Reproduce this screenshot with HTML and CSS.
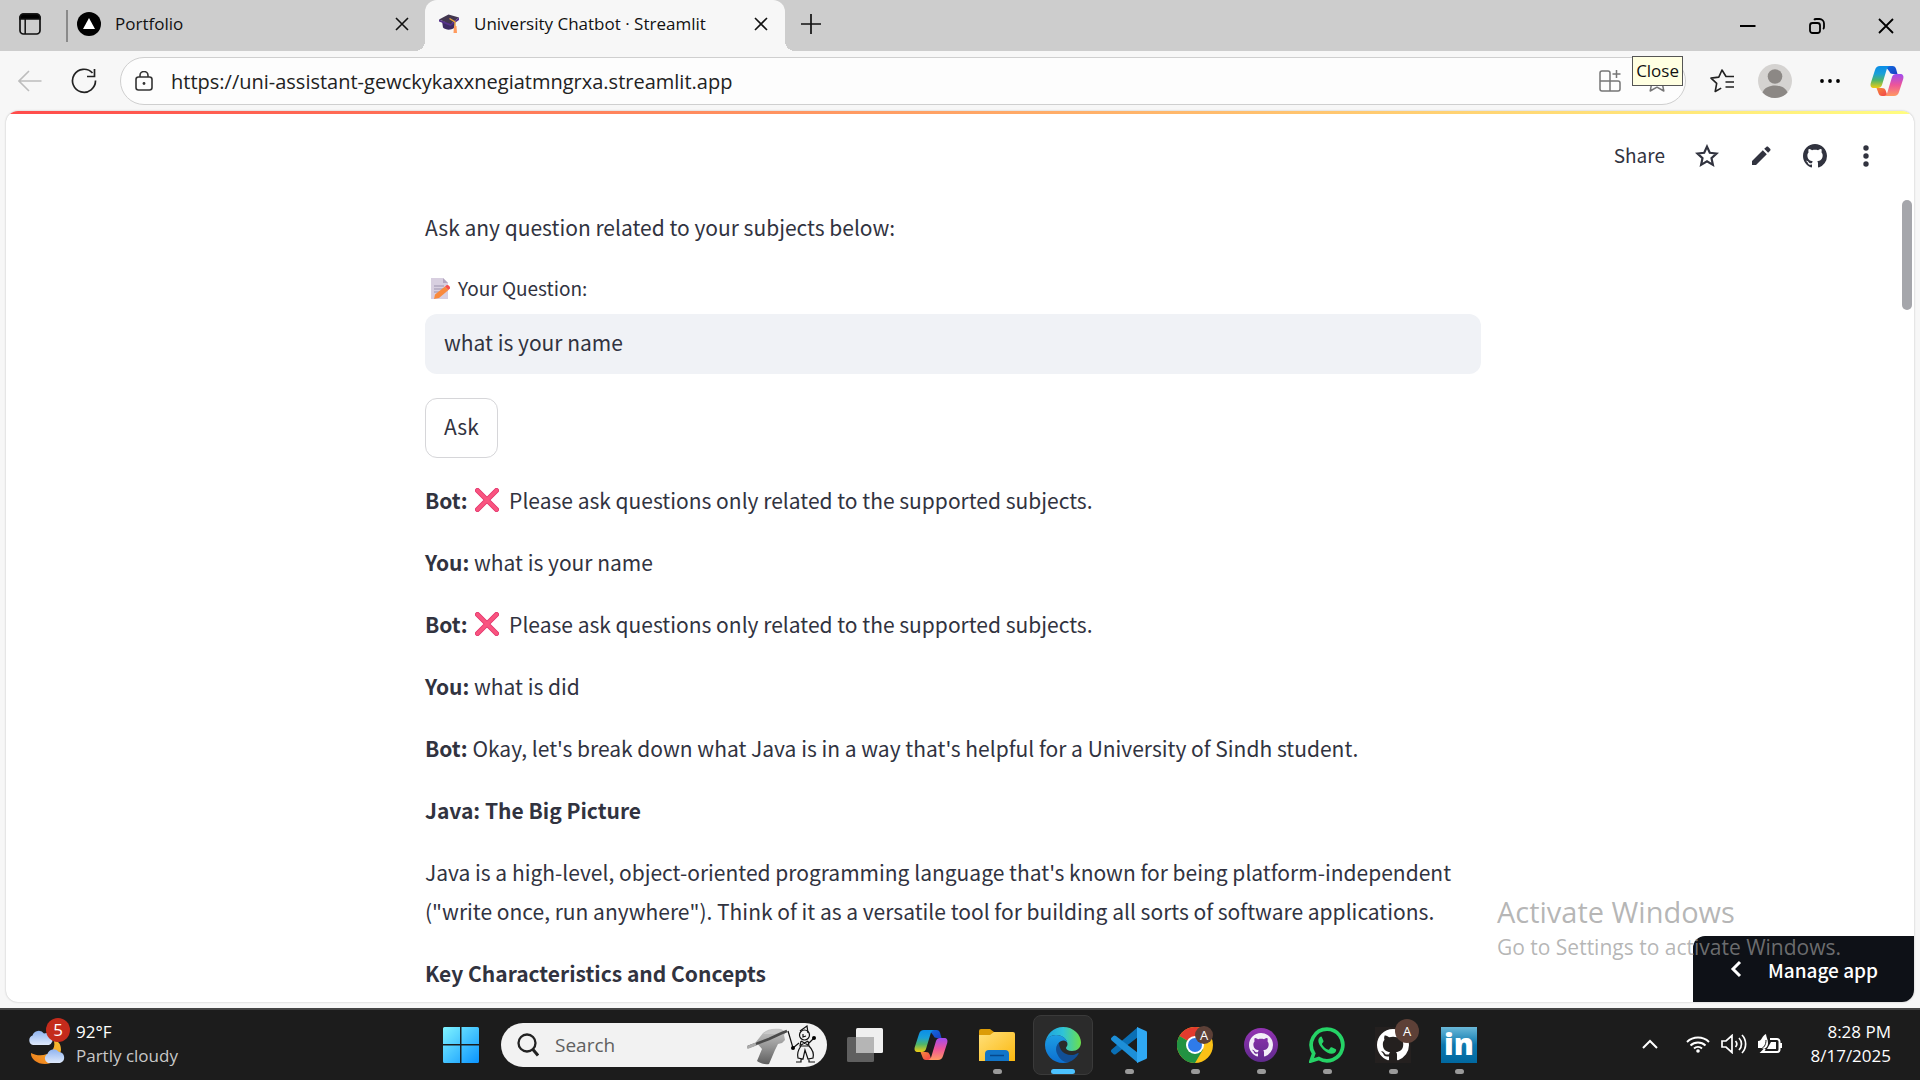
FILE: index.html
```html
<!DOCTYPE html>
<html lang="en">
<head>
<meta charset="utf-8">
<title>University Chatbot · Streamlit</title>
<meta name="viewport" content="width=device-width, initial-scale=1">
<link rel="stylesheet" href="styles.css">
</head>
<body>
<svg class="defs" aria-hidden="true">
  <defs>
    <linearGradient id="cpA" x1="0" y1="0" x2="0" y2="1"><stop offset="0" stop-color="#0a8de8"/><stop offset=".35" stop-color="#1aa0d8"/><stop offset=".65" stop-color="#4fb56a"/><stop offset="1" stop-color="#f0cc12"/></linearGradient>
    <linearGradient id="cpB" x1="0" y1="0" x2="0" y2="1"><stop offset="0" stop-color="#a04bf0"/><stop offset=".5" stop-color="#ee5599"/><stop offset="1" stop-color="#ff9a62"/></linearGradient>
    <linearGradient id="cpC" x1="0" y1="0" x2="1" y2="1"><stop offset="0" stop-color="#0f6fe0"/><stop offset="1" stop-color="#1a3fc4"/></linearGradient>
    <linearGradient id="cpD" x1="0" y1="0" x2="1" y2="1"><stop offset="0" stop-color="#f58a3c"/><stop offset="1" stop-color="#f2404a"/></linearGradient>
    <linearGradient id="win" x1="0" y1="0" x2="1" y2="1"><stop offset="0" stop-color="#80f4ff"/><stop offset="1" stop-color="#0a94ff"/></linearGradient>
    <linearGradient id="cloud" x1="0" y1="0" x2="0" y2="1"><stop offset="0" stop-color="#8fb4f0"/><stop offset="1" stop-color="#dfe9fb"/></linearGradient>
    <linearGradient id="moon" x1="1" y1="0" x2="0" y2="1"><stop offset="0" stop-color="#f8c030"/><stop offset="1" stop-color="#ee7a1c"/></linearGradient>
    <linearGradient id="fold" x1="0" y1="0" x2="1" y2="1"><stop offset="0" stop-color="#ffe07a"/><stop offset="1" stop-color="#fbb80f"/></linearGradient>
    <linearGradient id="edgeTop" x1="0" y1="0" x2="1" y2="0"><stop offset="0" stop-color="#1a9fe0"/><stop offset=".5" stop-color="#2fc3d8"/><stop offset="1" stop-color="#6be04b"/></linearGradient>
    <linearGradient id="edgeL" x1="0" y1="0" x2="0" y2="1"><stop offset="0" stop-color="#1d9ee4"/><stop offset="1" stop-color="#0c6fd0"/></linearGradient>
    <linearGradient id="linked" x1="0" y1="0" x2="0" y2="1"><stop offset="0" stop-color="#6ab8d8"/><stop offset=".5" stop-color="#0d78ae"/><stop offset="1" stop-color="#0168a0"/></linearGradient>
    <linearGradient id="ghp" x1="0" y1="0" x2="0" y2="1"><stop offset="0" stop-color="#9333b3"/><stop offset="1" stop-color="#5f2a8c"/></linearGradient>
    <linearGradient id="hand" x1="0" y1="0" x2="0" y2="1"><stop offset="0" stop-color="#c8c8c8"/><stop offset=".5" stop-color="#969696"/><stop offset="1" stop-color="#5e5e5e"/></linearGradient>
    <symbol id="copilot" viewBox="0 0 34 32">
      <path d="M15 1h7.500c2 0 3 1 3.600 3l1.400 5h-4.500c-2 0-3-.8-3.600-2.500z" fill="url(#cpC)"/>
      <path d="M10 1h10c-2 .5-3 2-3.500 4l-4.500 15c-.7 2-2 3-4 3H4c-3 0-4-2-3.200-5L5 5c.8-2.600 2.400-4 5-4z" fill="url(#cpA)"/>
      <path d="M6.500 23h5c2.500 0 3.600.8 4.200 2.600L17.500 31H12c-2 0-3-1-3.600-3z" fill="url(#cpD)"/>
      <path d="M24 31H14c2-.5 3-2 3.500-4L22 12c.7-2 2-3 4-3h4c3 0 4 2 3.200 5L29 27c-.8 2.600-2.400 4-5 4z" fill="url(#cpB)"/>
    </symbol>
    <symbol id="octocat" viewBox="0 0 16 16">
      <path d="M8 0C3.580 0 0 3.580 0 8c0 3.540 2.290 6.530 5.470 7.590.4.070.550-.170.550-.380 0-.190-.010-.820-.010-1.490-2.010.370-2.530-.490-2.690-.940-.090-.230-.480-.940-.820-1.130-.280-.150-.680-.520-.010-.530.630-.010 1.080.580 1.230.820.720 1.210 1.870.870 2.330.660.070-.520.280-.870.510-1.070-1.780-.2-3.640-.890-3.640-3.950 0-.870.310-1.590.820-2.150-.080-.2-.360-1.020.080-2.120 0 0 .670-.210 2.200.820.640-.180 1.320-.270 2-.270s1.360.090 2 .270c1.530-1.040 2.200-.820 2.200-.820.440 1.100.160 1.920.080 2.120.510.560.820 1.270.820 2.150 0 3.070-1.870 3.750-3.650 3.950.290.250.540.730.540 1.480 0 1.070-.010 1.930-.010 2.200 0 .210.150.460.550.380A8.010 8.010 0 0 0 16 8c0-4.420-3.580-8-8-8z"/>
    </symbol>
    <symbol id="close" viewBox="0 0 14 14"><path d="M1 1l12 12M13 1L1 13" fill="none" stroke="#111" stroke-width="1.600"/></symbol>
    <symbol id="cross" viewBox="0 0 24 24"><path d="M2.500 2.500l19 19M21.500 2.500l-19 19" stroke="#e0306a" stroke-width="5" stroke-linecap="round"/><path d="M2.500 2.500l19 19M21.500 2.500l-19 19" stroke="#f9547f" stroke-width="3.600" stroke-linecap="round"/></symbol>
  </defs>
</svg>

<div class="desktop">
  <header class="tabstrip">
    <button class="tab-menu" aria-label="Tab actions">
      <svg width="22" height="22" viewBox="0 0 22 22"><rect x="1" y="1" width="20" height="20" rx="3.500" fill="none" stroke="#111" stroke-width="1.700"/><path d="M1 6V4.500A3.500 3.500 0 0 1 4.500 1h13A3.500 3.500 0 0 1 21 4.500V6zM6.200 6v15" stroke="#111" stroke-width="1.500"/></svg>
    </button>
    <div class="tab">
      <svg width="24" height="24" viewBox="0 0 24 24"><circle cx="12" cy="12" r="12"/><path d="M12 6l6 11H6z" fill="#fff"/></svg>
      <span class="tab-title">Portfolio</span>
      <button aria-label="Close tab"><svg width="14" height="14"><use href="#close"/></svg></button>
    </div>
    <div class="tab tab-active">
      <svg width="20" height="20" viewBox="0 0 20 20"><path d="M3 7l1 6.500c2.500 2.500 7.500 3 11 .5l1-5z" fill="#3d2a63"/><path d="M0 5.500L9.500.5 20 3.500 11.500 10z" fill="#42364f"/><path d="M11.500 10L20 3.500V6l-8.500 6L0 7.500v-2z" fill="#55318a"/><path d="M10.500 4.500L16 8v5" fill="none" stroke="#e9a23b" stroke-width="1.400"/><path d="M15 12h2.500l.5 7h-3.500z" fill="#ff9b5e"/></svg>
      <span class="tab-title">University Chatbot · Streamlit</span>
      <button aria-label="Close tab"><svg width="14" height="14"><use href="#close"/></svg></button>
    </div>
    <button class="new-tab" aria-label="New tab"><svg width="22" height="22" viewBox="0 0 22 22"><path d="M11 1v20M1 11h20" stroke="#111" stroke-width="1.700"/></svg></button>
    <div class="window-controls">
      <button aria-label="Minimize"><svg width="16" height="16" viewBox="0 0 16 16"><path d="M0 8h15.500" stroke="#000" stroke-width="2"/></svg></button>
      <button aria-label="Restore"><svg width="16" height="16" viewBox="0 0 16 16" fill="none" stroke="#000" stroke-width="1.800"><rect x="1" y="5" width="10" height="10" rx="2.500"/><path d="M5 1.800C5.500 1.200 6 1 7 1h3.500A4.500 4.500 0 0 1 15 5.500V9c0 1-.3 1.600-1 2"/></svg></button>
      <button aria-label="Close window"><svg width="16" height="16" viewBox="0 0 16 16"><path d="M1 1l14 14M15 1L1 15" stroke="#000" stroke-width="1.800"/></svg></button>
    </div>
  </header>

  <nav class="toolbar">
    <button class="back" aria-label="Back"><svg width="24" height="22" viewBox="0 0 24 22"><path d="M23.500 11H1M11 1L1 11l10 10" fill="none" stroke="#bdbdbd" stroke-width="1.600"/></svg></button>
    <button class="reload" aria-label="Refresh"><svg width="26" height="26" viewBox="0 0 26 26"><path d="M24.500 12.500A11.500 11.500 0 1 1 21.500 5M23.500 1v7.500H16" fill="none" stroke="#222" stroke-width="1.700"/></svg></button>
    <div class="address">
      <svg width="18" height="20" viewBox="0 0 18 20" fill="none" stroke="#333" stroke-width="1.600"><rect x="1" y="6" width="16" height="13" rx="2.500"/><path d="M5 6V4.500a4 4 0 0 1 8 0V6"/><circle cx="9" cy="12.500" r="1.400" fill="#333" stroke="none"/></svg>
      <input type="text" aria-label="Address" value="https://uni-assistant-gewckykaxxnegiatmngrxa.streamlit.app">
      <button aria-label="App available"><svg width="22" height="22" viewBox="0 0 22 22" fill="none" stroke="#767676" stroke-width="1.500"><path d="M1 11V3a2 2 0 0 1 2-2h6a2 2 0 0 1 2 2v18H3a2 2 0 0 1-2-2v-8h18a2 2 0 0 1 2 2v6a2 2 0 0 1-2 2h-8M17.500 0v8M13.500 4h8"/></svg></button>
      <button class="favorite" aria-label="Add to favorites"><svg width="24" height="24" viewBox="0 0 24 24" fill="none" stroke="#767676" stroke-width="1.500" stroke-linejoin="round"><path d="M12 1l3.300 7.100 7.700 1-5.700 5.300L18.800 22 12 18.200 5.200 22l1.500-7.600L1 9.100l7.700-1z"/></svg></button>
      <span class="tooltip" role="tooltip">Close</span>
    </div>
    <button class="collections" aria-label="Favorites"><svg width="24" height="24" viewBox="0 0 24 24" fill="none" stroke="#222" stroke-width="1.600" stroke-linejoin="round"><path d="M16 7.500L12 1 8.800 8.100 1 9.100l5.700 5.300L5.200 22.500l6-3.400M15.500 7.500H24M15.500 13H24M15.500 18H24"/></svg></button>
    <button class="profile" aria-label="Profile"><svg width="34" height="34" viewBox="0 0 34 34"><circle cx="17" cy="17" r="17" fill="#d5d3d1"/><circle cx="17" cy="12.500" r="7.300" fill="#8c8885"/><path d="M4.500 28.500c2-5 7-7 12.500-7s10.500 2 12.500 7A17 17 0 0 1 17 34a17 17 0 0 1-12.500-5.500z" fill="#8c8885"/></svg></button>
    <button class="more" aria-label="Settings and more"><svg width="20" height="4" viewBox="0 0 20 4"><circle cx="2" cy="2" r="1.900"/><circle cx="10" cy="2" r="1.900"/><circle cx="18" cy="2" r="1.900"/></svg></button>
    <button aria-label="Copilot"><svg width="34" height="32"><use href="#copilot"/></svg></button>
  </nav>

  <div class="viewport">
    <div class="page">
      <div class="app-header">
        <button class="share">Share</button>
        <button aria-label="Star"><svg width="24" height="24" viewBox="0 0 24 24" fill="none" stroke="#31333f" stroke-width="2.200"><path d="M12 2.600l2.800 6.200 6.700.7-5 4.600 1.400 6.800-5.900-3.500-5.900 3.500 1.400-6.800-5-4.600 6.700-.7z"/></svg></button>
        <button aria-label="Edit"><svg width="20" height="20" viewBox="0 0 20 20" fill="#31333f"><path d="M1 15L11.800 4.200l4 4L5 19H1zM13.200 2.800L15.300.9c.6-.6 1.400-.6 2 0l1.800 1.800c.6.600.6 1.400 0 2l-2 2.100z"/></svg></button>
        <button aria-label="View source"><svg width="24" height="24" fill="#31333f"><use href="#octocat"/></svg></button>
        <button class="menu-dots" aria-label="Main menu"><svg width="6" height="22" viewBox="0 0 6 22" fill="#31333f"><circle cx="3" cy="3" r="2.700"/><circle cx="3" cy="11" r="2.700"/><circle cx="3" cy="19" r="2.700"/></svg></button>
      </div>
      <div class="scroll-area">
        <main class="content">
          <p>Ask any question related to your subjects below:</p>
          <form class="ask-form">
            <div class="field">
              <label for="question"><svg width="20" height="22" viewBox="0 0 20 22"><path d="M0 1h12l5 5v16H0z" fill="#d8cfe0"/><path d="M12 1l5 5h-5z" fill="#b3a6c0"/><path d="M3 9h10M3 12h9M3 15h7" stroke="#9b93ad" stroke-width="1.200"/><path d="M3 22l1-4.500L14 9.500l3.500 3.500-9.500 8z" fill="#f98a3d"/><path d="M14 9.500l1.500-1.300c1.500-.5 4 1.500 3.400 3L17.500 13z" fill="#f4504e"/></svg> Your Question:</label>
              <input id="question" type="text" value="what is your name">
            </div>
            <button class="ask" type="button">Ask</button>
          </form>
          <p><b>Bot:</b> <svg class="cross" width="24" height="24"><use href="#cross"/></svg> Please ask questions only related to the supported subjects.</p>
          <p><b>You:</b> what is your name</p>
          <p><b>Bot:</b> <svg class="cross" width="24" height="24"><use href="#cross"/></svg> Please ask questions only related to the supported subjects.</p>
          <p><b>You:</b> what is did</p>
          <p><b>Bot:</b> Okay, let's break down what Java is in a way that's helpful for a University of Sindh student.</p>
          <p><b>Java: The Big Picture</b></p>
          <p>Java is a high-level, object-oriented programming language that's known for being platform-independent ("write once, run anywhere"). Think of it as a versatile tool for building all sorts of software applications.</p>
          <p><b>Key Characteristics and Concepts</b></p>
        </main>
      </div>
      <div class="scroll-thumb"></div>
      <button class="manage"><svg width="12" height="18" viewBox="0 0 12 18"><path d="M10 2L3 9l7 7" fill="none" stroke="#fff" stroke-width="3"/></svg>Manage app</button>
    </div>
    <div class="watermark"><div class="watermark-title">Activate Windows</div><div>Go to Settings to activate Windows.</div></div>
  </div>

  <footer class="taskbar">
    <button class="weather">
      <span class="weather-icon"><svg width="38" height="42" viewBox="0 0 38 42"><path d="M26 18c3 12-12 18-23 12-.5 6 6 11 14 11s15-6 16-14c0-4-1-9-7-9z" fill="url(#moon)"/><path d="M5 22a5 5 0 0 1-.5-9.500A6.500 6.500 0 0 1 16 10.500 6 6 0 0 1 21 22z" fill="url(#cloud)"/><path d="M20 40a5 5 0 0 1-.5-9A6.500 6.500 0 0 1 31 29a5.600 5.600 0 0 1 1 11z" fill="url(#cloud)"/></svg><span class="badge">5</span></span>
      <span class="weather-text"><span>92°F</span><span class="muted">Partly cloudy</span></span>
    </button>
    <div class="apps">
      <button class="app" aria-label="Start"><svg width="36" height="36" viewBox="0 0 36 36"><path d="M1.500 0H17v17H0V1.500A1.500 1.500 0 0 1 1.500 0zM18.500 0h16A1.500 1.500 0 0 1 36 1.500V17H18.500zM0 18.500h17V36H1.500A1.500 1.500 0 0 1 0 34.500zM18.500 18.500H36v16a1.500 1.500 0 0 1-1.500 1.500h-16z" fill="url(#win)"/></svg></button>
      <div class="search">
        <svg width="22" height="24" viewBox="0 0 22 24" fill="none" stroke="#222" stroke-width="2.300"><circle cx="10" cy="10" r="8.500"/><path d="M15.500 16l5.500 6.500" stroke-width="3"/></svg>
        <input type="text" aria-label="Search" placeholder="Search">
        <svg width="70" height="40" viewBox="0 0 70 40"><path d="M9 17l7-9c4-4 10-5 18-4l5 3-2 3 1 5-3 3-4 1-3 6-6 14c-4 1-9-1-12-3l5-12z" fill="url(#hand)"/><path d="M16 9c6-5 14-5 20-3l-8 3z" fill="#c9c9c9"/><path d="M1 22L22 14 35 8l5-2" fill="none" stroke="#4a4a4a" stroke-width="2.500"/><path d="M0 22.500l9-3.500" stroke="#aaa" stroke-width="3"/><g fill="none" stroke="#111" stroke-width="1.200"><path d="M41 6l5 17 6-5M53 6l7-5 1 7"/><circle cx="57.500" cy="10" r="5"/><path d="M56 9v3l3-1M54 16l-1 5h9l-1-5M54 16l7 4M61 16l-7 4M62 18l5-5M54 21c-3 4-4 8-3 12l5 1 2-9 3 9 5-1c1-4-1-9-4-12M54 34v3h-5M62 34v3h6"/></g><circle cx="46" cy="23" r="2"/><circle cx="67" cy="13" r="2"/></svg>
      </div>
      <button class="app" aria-label="Task view"><svg width="36" height="34" viewBox="0 0 36 34"><rect x="9" width="27" height="25" rx="1.500" fill="#efefef"/><rect y="9" width="27" height="25" rx="1.500" fill="#5f5f5f"/><path d="M9 9h18v16H9z" fill="#b5b5b5"/></svg></button>
      <button class="app" aria-label="Copilot"><svg width="34" height="32"><use href="#copilot"/></svg></button>
      <button class="app running" aria-label="File Explorer"><svg width="36" height="34" viewBox="0 0 36 34"><path d="M0 3a2 2 0 0 1 2-2h9l4 3v6H0z" fill="#dc9c07"/><path d="M0 7h11l4-3h19a2 2 0 0 1 2 2v27H0z" fill="url(#fold)"/><path d="M6 33V26a4 4 0 0 1 4-4h16a4 4 0 0 1 4 4v7z" fill="#1275c8"/><path d="M11 27.500h14" stroke="#07488c" stroke-width="1.500"/></svg></button>
      <button class="app running active" aria-label="Microsoft Edge"><svg width="36" height="36" viewBox="0 0 36 36"><path d="M0 17C1 7 9 0 18 0c11 0 18 8 18 15.500 0 5-4 8.500-9 8.500-4 0-6-1.500-6-3 0-1 1.500-1.500 1.500-4C22 11 16 8 11 8 5 8 1 12 0 17z" fill="url(#edgeTop)"/><path d="M0 18C0 12 5 8 11 8c7 0 11.500 4.500 11.500 9 0-2-2-3.500-4-3.500-4 0-7 4-6 9C14 31 20 35 24 35c-2 .7-4 1-6 1C8 36 0 28 0 18z" fill="url(#edgeL)"/><path d="M14 15.500c-3 3-4 7-1.500 12C15 33 20 36 24 35c4-1.300 7.500-4.500 9.500-8 .5-1-.3-1.300-1-.8-2 1.300-4.500 1.800-6.500 1.800-7 0-12-5-12-12.500z" fill="#114f96"/></svg></button>
      <button class="app running" aria-label="Visual Studio Code"><svg width="36" height="36" viewBox="0 0 36 36"><path d="M27 0v10L5 27c-1 .8-2 .7-2.700 0L.7 25.500c-1-.9-1-2 0-2.900z" fill="#0a6fb5"/><path d="M27 36V26L5 9c-1-.8-2-.7-2.700 0L.7 10.500c-1 .9-1 2 0 2.900z" fill="#1d8fd8"/><path d="M26 0l9 4c.6.300 1 .8 1 1.500v25c0 .7-.4 1.200-1 1.500l-9 4z" fill="#2fa8f3"/></svg></button>
      <button class="app running" aria-label="Google Chrome"><svg width="36" height="36" viewBox="0 0 36 36"><circle cx="18" cy="18" r="18" fill="#fbc116"/><path d="M18 18L2.400 9A18 18 0 0 1 33.600 9z" fill="#e33b2e"/><path d="M18 18L2.400 9A18 18 0 0 0 18 36l8-13.500z" fill="#229342"/><circle cx="18" cy="18" r="9" fill="#fff"/><circle cx="18" cy="18" r="7" fill="#2f7bea"/></svg><span class="account account-small">A</span></button>
      <button class="app running" aria-label="GitHub Desktop"><svg width="34" height="34" viewBox="0 0 34 34"><circle cx="17" cy="17" r="17" fill="url(#ghp)"/><svg x="5" y="5" width="24" height="24" fill="#f2eef8"><use href="#octocat"/></svg></svg></button>
      <button class="app running" aria-label="WhatsApp"><svg width="36" height="36" viewBox="0 0 36 36"><path d="M18 2.200A15.800 15.800 0 0 0 4.700 26.500L2.100 33.900l7.700-2.400A15.800 15.800 0 1 0 18 2.200z" fill="none" stroke="#25d366" stroke-width="3.700"/><path d="M12.500 9.500c-1.500 0-3.200 1.700-3.200 4.200 0 5 8 13 13.200 13 2.600 0 4.700-1.700 4.700-3.500 0-.7-.2-.9-.8-1.200l-3.600-1.700c-.6-.2-1-.1-1.400.4l-1.300 1.700c-.4.400-.8.400-1.300.2-2.400-1-4.500-3-5.700-5.200-.2-.4-.1-.8.2-1.100l1-1.300c.3-.4.300-.8.100-1.200l-1.500-3.500c-.2-.5-.3-.8-.4-.8z" fill="#25d366"/></svg></button>
      <button class="app running" aria-label="GitHub"><svg width="36" height="36" viewBox="0 0 36 36"><path d="M0 0h36v36H0z" fill="#24201f"/><svg x="2" y="2" width="32" height="32" fill="#fff"><use href="#octocat"/></svg></svg><span class="account">A</span></button>
      <button class="app running" aria-label="LinkedIn"><svg width="36" height="36" viewBox="0 0 36 36"><path d="M0 0h36v36H0z" fill="url(#linked)"/><text class="linkedin-mark" x="18" y="28" text-anchor="middle">in</text></svg></button>
    </div>
    <div class="tray">
      <button aria-label="Show hidden icons"><svg width="16" height="10" viewBox="0 0 16 10"><path d="M1 9l7-7 7 7" fill="none" stroke="#fff" stroke-width="2"/></svg></button>
      <button class="quick" aria-label="Network, volume and battery">
        <svg width="24" height="18" viewBox="0 0 24 18" fill="none" stroke="#fff" stroke-width="2"><path d="M1 7a16 16 0 0 1 22 0M4.500 10.500a11 11 0 0 1 15 0M8 13.500a6 6 0 0 1 8 0"/><circle cx="12" cy="16" r="1.800" fill="#fff" stroke="none"/></svg>
        <svg width="26" height="20" viewBox="0 0 26 20" fill="none" stroke="#fff" stroke-width="1.700"><path d="M1 7h4l6-5.500v17L5 13H1zM14.500 7a4.500 4.500 0 0 1 0 6M18 4a8.500 8.500 0 0 1 0 12M21 1a13 13 0 0 1 0 18"/></svg>
        <svg width="24" height="20" viewBox="0 0 24 20"><path d="M12 5h7a2.500 2.500 0 0 1 2.500 2.500v8A2.500 2.500 0 0 1 19 18H4l3-3" fill="none" stroke="#fff" stroke-width="2"/><path d="M22 9h2v5h-2zM13 8h5v7H9z" fill="#fff"/><path d="M0 14V7c2 0 3-1 4-3s2-3 4-4c0 3 2 5 2 9s-3 7-7 5z" fill="#fff"/><path d="M2 15C6 14 8 11 8 6" fill="none" stroke="#1c1c1c"/></svg>
      </button>
      <time class="clock" datetime="2025-08-17T20:28"><span>8:28 PM</span><span>8/17/2025</span></time>
    </div>
  </footer>
</div>
</body>
</html>
```
FILE: styles.css
```css
:root {
  --ui: "Open Sans", "Noto Sans", sans-serif;
  --app: "Noto Sans CJK SC", "Noto Sans", sans-serif;
  --ink: #31333f;
}

* { box-sizing: border-box; }

body {
  margin: 0;
  font-family: var(--ui);
  color: #111;
  background: #f7f7f7;
}

button,
input {
  margin: 0;
  padding: 0;
  border: 0;
  background: none;
  color: inherit;
  font: inherit;
}

button {
  display: flex;
  align-items: center;
  justify-content: center;
}

svg { display: block; flex: none; }

.defs { position: absolute; width: 0; height: 0; }

.desktop {
  display: flex;
  flex-direction: column;
  height: 100vh;
  overflow: hidden;
}

/* Tab strip */
.tabstrip {
  display: flex;
  flex: none;
  height: 51px;
  background: #cdcdcd;
}

.tab-menu { width: 60px; padding-bottom: 3px; }

.tab {
  display: flex;
  align-items: center;
  width: 359px;
  padding: 0 16px 3px 17px;
  gap: 14px;
  font-size: 17px;
}

.tab:not(.tab-active) {
  border-left: 2px solid #8a8a8a;
  padding-left: 9px;
  border-image: linear-gradient(transparent 11px, #8a8a8a 11px, #8a8a8a 41px, transparent 41px) 1;
  margin-left: 6px;
}

.tab-active {
  position: relative;
  width: 360px;
  padding-left: 14px;
  padding-right: 17px;
  gap: 15px;
  border-radius: 12px 12px 0 0;
  background: #f7f7f7;
}

.tab-active::before,
.tab-active::after {
  content: "";
  position: absolute;
  bottom: 0;
  width: 10px;
  height: 10px;
}

.tab-active::before {
  right: 100%;
  background: radial-gradient(circle at 0 0, #cdcdcd 10px, #f7f7f7 10px);
}

.tab-active::after {
  left: 100%;
  background: radial-gradient(circle at 100% 0, #cdcdcd 10px, #f7f7f7 10px);
}

.tab-title { flex: 1; padding-bottom: 2px; white-space: nowrap; }

.new-tab { width: 52px; padding-bottom: 4px; }

.window-controls { display: flex; margin-left: auto; }

.window-controls button { width: 69px; }

/* Address toolbar */
.toolbar {
  display: flex;
  flex: none;
  align-items: center;
  height: 60px;
  padding: 0 16px 0 18px;
}

.reload { margin: 0 23px 0 29px; }

.address {
  position: relative;
  display: flex;
  flex: 1;
  align-items: center;
  height: 48px;
  padding: 0 16px 0 14px;
  border: 1px solid #cfcfcf;
  border-radius: 24px;
  background: #fdfdfd;
}

.address input {
  flex: 1;
  margin: 0 18px;
  font-size: 20px;
  color: #222;
}

.favorite { margin-left: 24px; }

.tooltip {
  position: absolute;
  top: -2px;
  right: 2px;
  padding: 0 3px;
  border: 1px solid #555;
  background: #ffffe1;
  font-size: 17px;
  line-height: 28px;
}

.collections { margin: 0 24px; }

.more { margin: 0 30px 0 28px; }

/* Page viewport */
.viewport {
  position: relative;
  flex: 1;
  min-height: 0;
  padding: 0 6px 6px;
}

.page {
  position: relative;
  height: 100%;
  overflow: hidden;
  border-radius: 12px;
  background: #fff;
  box-shadow: 0 0 2px #b5b5b5;
  font-family: var(--app);
  font-size: 21px;
  line-height: 39px;
  color: var(--ink);
}

.page::before {
  content: "";
  display: block;
  height: 3px;
  background: linear-gradient(90deg, #ff4b4b, #fffd80);
}

.app-header {
  display: flex;
  align-items: center;
  justify-content: flex-end;
  height: 84px;
  padding-right: 45px;
  gap: 30px;
}

.app-header button { min-width: 24px; }

.app-header .share { padding-bottom: 3px; font-size: 19px; }

.app-header .menu-dots { min-width: 6px; margin-left: 6px; }

.scroll-area { padding: 10px 14px 0 0; }

.content {
  display: flex;
  flex-direction: column;
  gap: 23px;
  max-width: 1056px;
  margin: 0 auto;
}

.content p { margin: 0; }

.content b { font-weight: 700; }

.cross {
  display: inline-block;
  margin: 0 5px 0 3px;
  vertical-align: -3px;
}

.ask-form {
  display: flex;
  flex-direction: column;
  align-items: flex-start;
  gap: 24px;
}

.field { width: 100%; }

.field label {
  display: flex;
  align-items: center;
  gap: 7px;
  height: 44px;
  padding: 0 0 9px 6px;
  font-size: 19px;
}

.field input {
  width: 100%;
  height: 60px;
  padding: 0 19px 4px;
  border-radius: 12px;
  background: #f0f2f6;
}

.ask {
  height: 60px;
  padding: 0 18px 3px;
  border: 1px solid #d6d6d9;
  border-radius: 12px;
}

.scroll-thumb {
  position: absolute;
  top: 89px;
  right: 2px;
  width: 10px;
  height: 110px;
  border-radius: 5px;
  background: #a5a6ab;
}

.manage {
  position: absolute;
  right: 0;
  bottom: 0;
  height: 66px;
  padding: 0 36px 0 37px;
  gap: 26px;
  border-radius: 12px 0 0 0;
  background: #0e1117;
  color: #fff;
  font-size: 19px;
  font-weight: 500;
}

.watermark {
  position: absolute;
  right: 79px;
  bottom: 46px;
  color: rgba(150, 150, 150, 0.7);
  font-size: 21px;
  line-height: 30px;
  pointer-events: none;
}

.watermark-title { font-size: 29px; line-height: 40px; }

/* Taskbar */
.taskbar {
  display: grid;
  grid-template-columns: 1fr auto 1fr;
  flex: none;
  height: 72px;
  border-top: 2px solid #444;
  background: #1c1c1c;
  color: #fff;
  font-size: 17px;
  line-height: 24px;
}

.weather { justify-content: flex-start; padding: 0 0 2px 28px; gap: 10px; }

.weather-icon { position: relative; }

.badge {
  position: absolute;
  top: -5px;
  right: -4px;
  width: 24px;
  border-radius: 12px;
  background: #c42b1c;
  text-align: center;
}

.weather-text { display: flex; flex-direction: column; text-align: left; }

.muted { color: #c8c8c8; }

.apps { display: flex; align-items: center; }

.app { position: relative; width: 66px; height: 60px; }

.active {
  width: 60px;
  margin: 0 3px;
  border: 1px solid #3a3a3a;
  border-radius: 8px;
  background: #2b2b2b;
}

.running::after {
  content: "";
  position: absolute;
  bottom: 1px;
  width: 9px;
  height: 5px;
  border-radius: 3px;
  background: #9a9a9a;
}

.active::after { bottom: 0; width: 24px; background: #4cc2ff; }

.account {
  position: absolute;
  top: 4px;
  right: 7px;
  width: 24px;
  border-radius: 12px;
  background: #5d4037;
  font-size: 13px;
}

.account-small {
  top: 11px;
  right: 15px;
  width: 18px;
  line-height: 18px;
}

.linkedin-mark { font: 800 30px var(--ui); fill: #fff; }

.search {
  display: flex;
  align-items: center;
  width: 326px;
  height: 44px;
  margin: 0 5px 0 7px;
  padding: 0 10px 0 16px;
  border-radius: 22px;
  background: #f2f2f2;
}

.search input {
  flex: 1;
  min-width: 0;
  margin-left: 16px;
  font-size: 19px;
}

.search input::placeholder { color: #606060; opacity: 1; }

.tray {
  display: flex;
  align-items: center;
  justify-content: flex-end;
  padding: 0 29px 2px 0;
  gap: 28px;
}

.quick { gap: 11px; }

.clock { display: flex; flex-direction: column; text-align: right; }
```
